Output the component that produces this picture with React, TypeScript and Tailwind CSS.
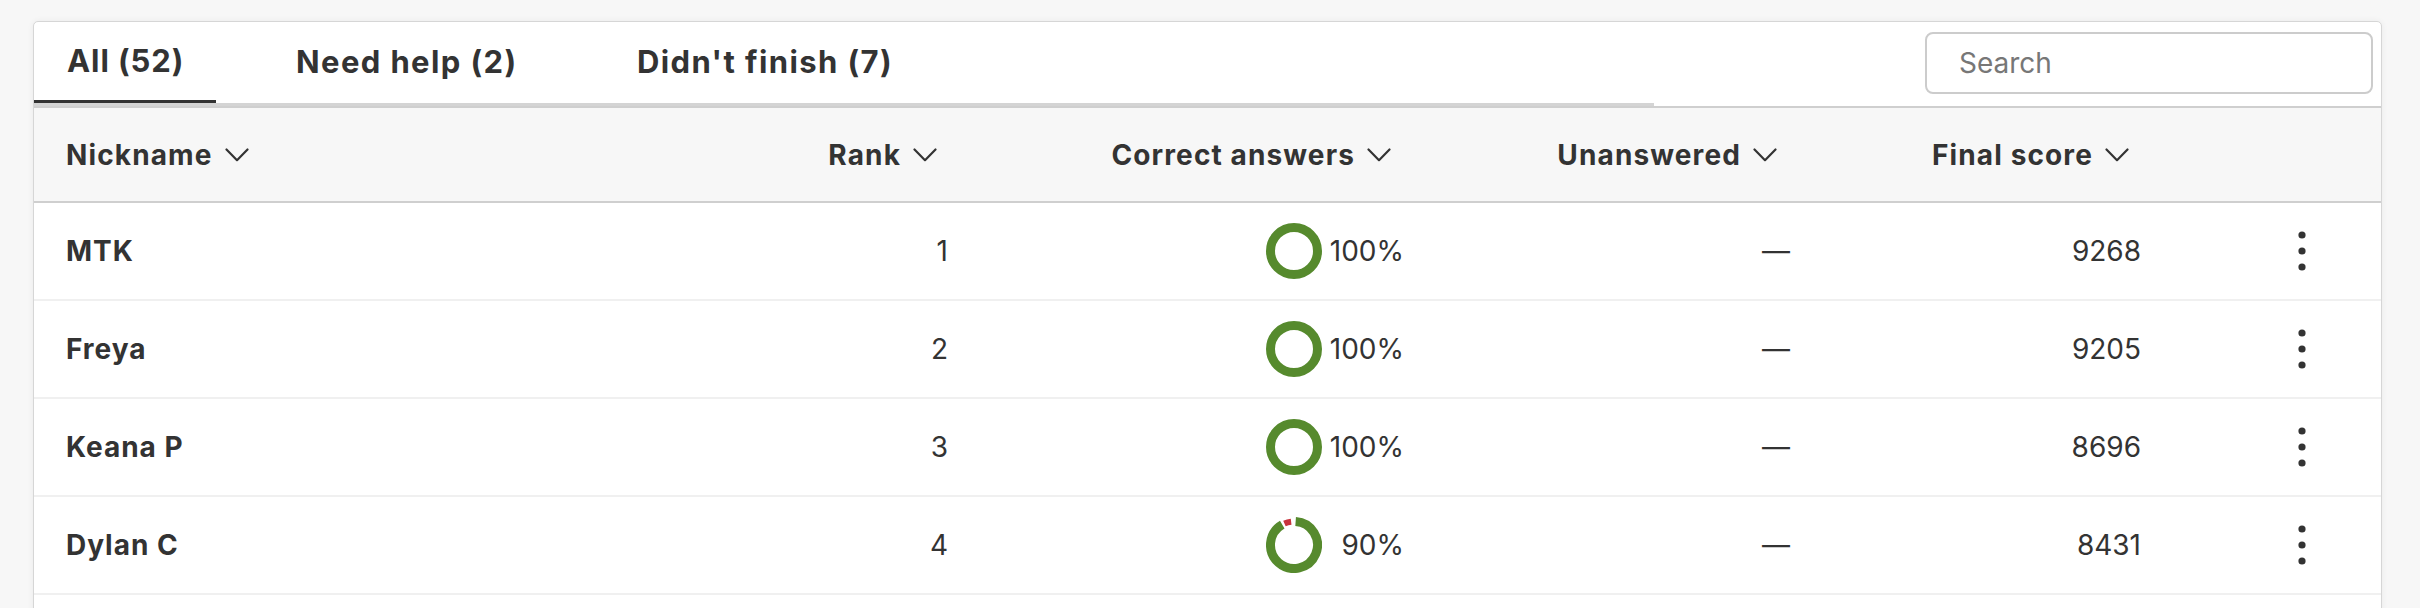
import React from "react";

const FONT = { fontFamily: 'Inter, "Open Sans", "Liberation Sans", sans-serif' };

function Chevron() {
  return (
    <svg width="24" height="14" viewBox="0 0 24 14" className="shrink-0">
      <polyline points="1.5,1.5 12,12.2 22.5,1.5" fill="none" stroke="#333" strokeWidth="2.2" strokeLinecap="round" strokeLinejoin="round" />
    </svg>
  );
}

function polar(cx: number, cy: number, r: number, deg: number) {
  const a = ((deg - 90) * Math.PI) / 180;
  return [cx + r * Math.cos(a), cy + r * Math.sin(a)];
}

function arc(start: number, end: number, r = 23.5) {
  const [x1, y1] = polar(28, 28, r, start);
  const [x2, y2] = polar(28, 28, r, end);
  const large = end - start > 180 ? 1 : 0;
  return `M ${x1} ${y1} A ${r} ${r} 0 ${large} 1 ${x2} ${y2}`;
}

function Donut({ pct }: { pct: number }) {
  return (
    <svg width="56" height="56" viewBox="0 0 56 56" className="shrink-0">
      {pct >= 100 ? (
        <circle cx="28" cy="28" r="23.5" fill="none" stroke="#568a2d" strokeWidth="9" />
      ) : (
        <>
          <path d={arc(4, 330)} fill="none" stroke="#568a2d" strokeWidth="9" />
          <path d={arc(336, 353)} fill="none" stroke="#c8343c" strokeWidth="6" />
        </>
      )}
    </svg>
  );
}

function Kebab() {
  return (
    <svg width="8" height="40" viewBox="0 0 8 40">
      <circle cx="4" cy="4" r="3.6" fill="#333" />
      <circle cx="4" cy="20" r="3.6" fill="#333" />
      <circle cx="4" cy="36" r="3.6" fill="#333" />
    </svg>
  );
}

const rows = [
  { name: "MTK", rank: 1, pct: 100, score: 9268 },
  { name: "Freya", rank: 2, pct: 100, score: 9205 },
  { name: "Keana P", rank: 3, pct: 100, score: 8696 },
  { name: "Dylan C", rank: 4, pct: 90, score: 8431 },
];

const GRID = "grid grid-cols-[734px_148px_456px_386px_351px_185px] pl-[32px] items-center";

export default function App() {
  return (
    <div className="min-h-screen bg-[#f7f7f7] pt-[21px] pl-[33px] text-[#333]" style={FONT}>
      <div className="w-[2349px] bg-white border border-[#d6d6d6] rounded-[5px] shadow-[0_0_6px_rgba(0,0,0,0.06)]">
        {/* tab bar */}
        <div className="flex h-[84px]">
          <div className="w-[1620px] h-full flex border-b-[3px] border-[#d4d4d4]">
            <div className="w-[182px] h-full flex items-center pl-[33px] border-b-[3px] border-[#333] -mb-[3px] text-[31px] font-bold tracking-[0.03em] whitespace-nowrap">
              All (52)
            </div>
            <div className="w-[341px] h-full flex items-center pl-[80px] text-[31px] font-bold tracking-[0.045em] whitespace-nowrap">
              Need help (2)
            </div>
            <div className="h-full flex items-center pl-[80px] text-[31px] font-bold tracking-[0.045em] whitespace-nowrap">
              Didn't finish (7)
            </div>
          </div>
          <div className="ml-auto mr-[8px] mt-[10px] w-[448px] h-[62px] border-2 border-[#cccccc] rounded-[8px] flex items-center pl-[32px] text-[28px] text-[#777]">
            Search
          </div>
        </div>
        {/* header */}
        <div className={`${GRID} h-[97px] bg-[#f7f7f7] border-t-2 border-b-2 border-[#cfcfcf] text-[28px] font-bold tracking-[0.04em]`}>
          <div className="flex items-center gap-[12px]">
            <span>Nickname</span>
            <Chevron />
          </div>
          <div className="flex items-center justify-end gap-[12px] pr-[11px]">
            <span>Rank</span>
            <Chevron />
          </div>
          <div className="flex items-center justify-end gap-[12px] pr-[13px]">
            <span>Correct answers</span>
            <Chevron />
          </div>
          <div className="flex items-center justify-end gap-[12px] pr-[13px]">
            <span>Unanswered</span>
            <Chevron />
          </div>
          <div className="flex items-center justify-end gap-[12px] pr-[12px]">
            <span>Final score</span>
            <Chevron />
          </div>
          <div />
        </div>
        {/* rows */}
        {rows.map((r) => (
          <div key={r.name} className={`${GRID} h-[98px] border-b-2 border-[#f0f0f0] text-[28px]`}>
            <div className="font-bold tracking-[0.035em]">{r.name}</div>
            <div className="text-right">{r.rank}</div>
            <div className="flex items-center justify-end">
              <Donut pct={r.pct} />
              <span className="w-[82px] text-right">{r.pct}%</span>
            </div>
            <div className="text-right">—</div>
            <div className="text-right">{r.score}</div>
            <div className="flex justify-end">
              <div className="w-[48px] flex justify-center">
                <Kebab />
              </div>
            </div>
          </div>
        ))}
        <div className="h-[60px]" />
      </div>
    </div>
  );
}
